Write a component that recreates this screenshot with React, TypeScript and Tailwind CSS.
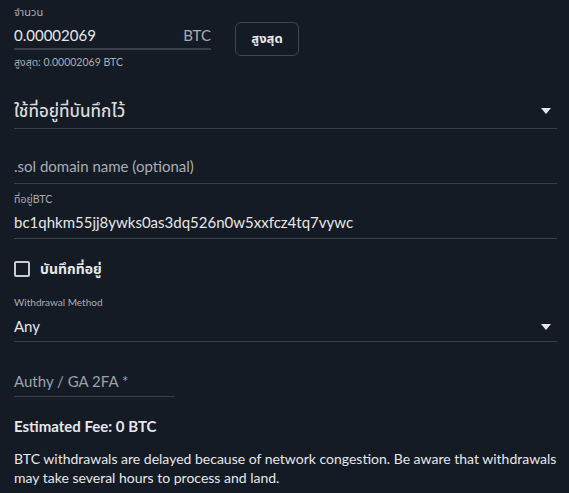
import React from 'react';

function Caret() {
  return (
    <svg width="10" height="6" viewBox="0 0 10 6" className="shrink-0">
      <path d="M0 0 L10 0 L5 6 Z" fill="#e5e7eb" />
    </svg>
  );
}

export default function App() {
  return (
    <div
      className="h-[493px] w-[569px] overflow-hidden bg-[#151b24] pl-[14px] pr-[12px] text-[#e6e7e9]"
      style={{ fontFamily: "Lato, 'Noto Sans Thai', 'Noto Sans', sans-serif" }}
    >
      {/* amount */}
      <div className="flex items-start gap-[24px] pt-[4px]">
        <div className="w-[197px]">
          <div className="h-[15px] text-[11px] leading-[15px] text-[#a9adb3]">จำนวน</div>
          <div className="flex h-[31px] items-center justify-between border-b-2 border-[#3a4049] pt-[4px]">
            <span className="text-[15px]">0.00002069</span>
            <span className="text-[15px] text-[#a9adb3]">BTC</span>
          </div>
          <div className="mt-[5px] text-[10.5px] leading-[14px] text-[#a9adb3]">สูงสุด: 0.00002069 BTC</div>
        </div>
        <button className="mt-[18px] flex h-[34px] w-[64px] items-center justify-center rounded-[6px] border border-[#3f4651] text-[13px] font-bold text-[#e6e7e9]">
          สูงสุด
        </button>
      </div>

      {/* saved address select */}
      <div className="mt-[25px] flex h-[35px] items-center justify-between border-b border-[#3a4049] pr-[6px]">
        <span className="text-[17px] font-medium text-[#d9dbde]">ใช้ที่อยู่ที่บันทึกไว้</span>
        <Caret />
      </div>

      {/* sol domain */}
      <div className="mt-[20px] flex h-[35px] items-center border-b border-[#3a4049]">
        <span className="text-[15px] text-[#a9adb3]">.sol domain name (optional)</span>
      </div>

      {/* BTC address */}
      <div className="mt-[8px] h-[14px] text-[10.5px] leading-[14px] text-[#a9adb3]">ที่อยู่BTC</div>
      <div className="flex h-[33px] items-center border-b border-[#3a4049]">
        <span className="text-[15px]">bc1qhkm55jj8ywks0as3dq526n0w5xxfcz4tq7vywc</span>
      </div>

      {/* save checkbox */}
      <label className="mt-[19px] flex items-center gap-[10px]">
        <span className="h-[16px] w-[16px] rounded-[2px] border-2 border-[#c9ccd1]" />
        <span className="text-[14px] font-bold">บันทึกที่อยู่</span>
      </label>

      {/* withdrawal method */}
      <div className="mt-[15px] h-[18px] text-[10px] leading-[16px] text-[#a9adb3]">Withdrawal Method</div>
      <div className="flex h-[30px] items-center justify-between border-b border-[#3a4049] pr-[6px]">
        <span className="text-[15px]">Any</span>
        <Caret />
      </div>

      {/* 2FA */}
      <div className="mt-[24px] flex h-[31px] w-[161px] items-center border-b border-[#3a4049]">
        <span className="text-[15px] text-[#9ca1a8]">Authy / GA 2FA *</span>
      </div>

      <div className="mt-[19px] text-[15px] font-bold leading-[20px]">Estimated Fee: 0 BTC</div>

      <p className="mt-[13px] text-[14px] leading-[19px] text-[#e6e7e9]">
        BTC withdrawals are delayed because of network congestion. Be aware that withdrawals may take several hours to process and land.
      </p>
    </div>
  );
}
